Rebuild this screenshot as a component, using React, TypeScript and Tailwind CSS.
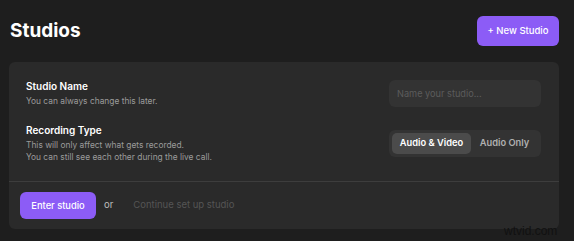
import React from 'react';

const StudiosPage: React.FC = () => {
  return (
    <div
      className="relative h-[241px] w-[574px] overflow-hidden bg-[#1e1e1e] pl-[9px] pr-[15px]"
      style={{ fontFamily: 'Inter, "Noto Sans", sans-serif' }}
    >
      <div className="flex h-[62px] items-center justify-between pb-[1px]">
        <h1 className="pl-[1px] text-[19px] font-bold leading-none text-white">Studios</h1>
        <button className="mt-[1px] h-[30px] w-[82px] rounded-md bg-[#8c5cf6] text-[9.5px] font-medium text-white">
          + New Studio
        </button>
      </div>

      <div className="rounded-md bg-[#2a2a2a]">
        <div className="flex flex-col gap-[16px] pb-[18px] pl-[17px] pr-[18px] pt-[17px]">
          <div className="flex items-center justify-between">
            <div>
              <div className="text-[10px] font-semibold leading-[14px] text-white">Studio Name</div>
              <div className="mt-[2px] text-[8.4px] leading-[12px] text-[#9b9b9b]">
                You can always change this later.
              </div>
            </div>
            <input
              placeholder="Name your studio..."
              className="h-[27px] w-[152px] rounded-md bg-[#333333] px-[8px] text-[9.2px] text-white outline-none placeholder:text-[#5c5c5c]"
            />
          </div>

          <div className="flex items-center justify-between">
            <div>
              <div className="text-[10px] font-semibold leading-[14px] text-white">Recording Type</div>
              <div className="mt-[2px] text-[8.4px] leading-[12px] text-[#9b9b9b]">
                <div>This will only affect what gets recorded.</div>
                <div>You can still see each other during the live call.</div>
              </div>
            </div>
            <div className="flex h-[27px] w-[152px] items-center rounded-md bg-[#333333] p-[3px]">
              <button className="h-[21px] w-[79px] rounded-[5px] bg-[#4b4b4b] text-[9.3px] font-semibold text-white">
                Audio &amp; Video
              </button>
              <button className="h-[21px] flex-1 text-[9.3px] font-semibold text-[#b0b0b0]">Audio Only</button>
            </div>
          </div>
        </div>

        <div className="flex h-[48px] items-center border-t border-[#3d3d3d] px-[11px]">
          <button className="h-[27px] w-[76px] rounded-md bg-[#8c5cf6] text-[9.3px] font-medium text-white">
            Enter studio
          </button>
          <span className="ml-[8px] text-[9.5px] text-[#bdbdbd]">or</span>
          <span className="ml-[20px] text-[9.5px] text-[#555555]">Continue set up studio</span>
        </div>
      </div>

      <div
        className="absolute left-[504px] top-[225px] text-[12px] leading-none text-[#111111]"
        style={{ fontFamily: '"Liberation Sans", Arial, sans-serif' }}
      >
        wtvid.com
      </div>
    </div>
  );
};

export default function App() {
  return <StudiosPage />;
}
